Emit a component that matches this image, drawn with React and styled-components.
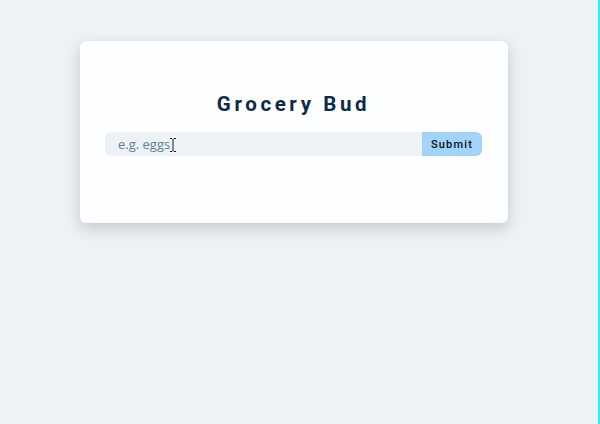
import React, { useState } from 'react';
import styled, { createGlobalStyle } from 'styled-components';

const GlobalStyle = createGlobalStyle`
  html, body {
    margin: 0;
    padding: 0;
    background: #edf2f6;
  }
  * {
    box-sizing: border-box;
  }
`;

const Page = styled.div`
  display: flex;
  width: 600px;
  height: 424px;
  background: #edf2f6;
`;

const Main = styled.main`
  flex: 1;
  padding: 41px 0 0 80px;
`;

const EdgeLine = styled.div`
  width: 2px;
  background: #1ff4f4;
`;

const Card = styled.section`
  width: 428px;
  height: 182px;
  background: #fdfeff;
  border-radius: 6px;
  box-shadow: 0 5px 15px rgba(0, 0, 0, 0.18);
  padding: 50px 26px 0 25px;
`;

const Title = styled.h3`
  margin: 0 0 15px;
  text-align: center;
  font-family: Roboto, 'Liberation Sans', sans-serif;
  font-weight: 700;
  font-size: 20.5px;
  line-height: 26px;
  letter-spacing: 3.6px;
  color: #0d2b45;
`;

const Form = styled.form`
  position: relative;
  display: flex;
  height: 24px;
`;

const Input = styled.input`
  flex: 1;
  min-width: 0;
  border: none;
  outline: none;
  background: #edf2f6;
  border-radius: 6px 0 0 6px;
  padding: 0 0 0 13px;
  font-family: 'Open Sans', 'Liberation Sans', sans-serif;
  font-size: 13px;
  color: #102a42;

  &::placeholder {
    color: #627d98;
  }
`;

const SubmitButton = styled.button`
  width: 60px;
  border: none;
  background: #a3d3f7;
  border-radius: 0 6px 6px 0;
  font-family: Roboto, 'Liberation Sans', sans-serif;
  font-size: 11px;
  font-weight: 500;
  letter-spacing: 1.2px;
  color: #06121e;
  cursor: pointer;
`;

const Caret = styled.svg`
  position: absolute;
  left: 64px;
  top: 5px;
  pointer-events: none;
`;

function TextCursor() {
  return (
    <Caret width="8" height="16" viewBox="0 0 8 16">
      <path
        d="M1 1.5h2l1 1 1-1h2M4 2.5v11M1 14.5h2l1-1 1 1h2"
        fill="none"
        stroke="#fff"
        strokeWidth="2.4"
      />
      <path
        d="M1 1.5h2l1 1 1-1h2M4 2.5v11M1 14.5h2l1-1 1 1h2"
        fill="none"
        stroke="#111"
        strokeWidth="1"
      />
    </Caret>
  );
}

export default function App() {
  const [item, setItem] = useState('');

  return (
    <Page>
      <GlobalStyle />
      <Main>
        <Card>
          <Title>Grocery Bud</Title>
          <Form onSubmit={(e) => e.preventDefault()}>
            <Input
              type="text"
              placeholder="e.g. eggs"
              value={item}
              onChange={(e) => setItem(e.target.value)}
            />
            <SubmitButton type="submit">Submit</SubmitButton>
            <TextCursor />
          </Form>
        </Card>
      </Main>
      <EdgeLine />
    </Page>
  );
}
